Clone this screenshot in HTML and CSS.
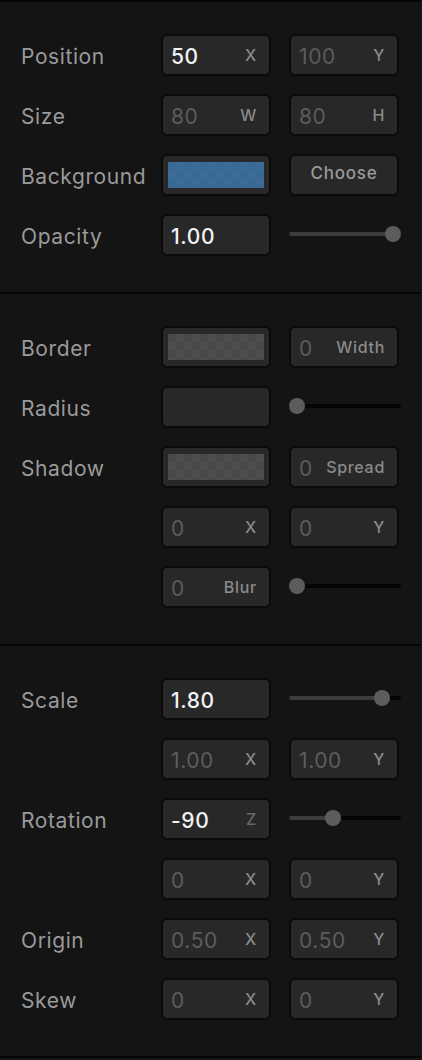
FILE: index.html
```html
<!DOCTYPE html>
<html>
<head>
<meta charset="utf-8">
<link rel="stylesheet" href="styles.css">
</head>
<body>
<div class="panel">
  <section class="section">
    <div class="row">
      <div class="label">Position</div>
      <div class="field"><span class="val on">50</span><span class="suf">X</span></div>
      <div class="field"><span class="val">100</span><span class="suf">Y</span></div>
    </div>
    <div class="row">
      <div class="label">Size</div>
      <div class="field"><span class="val">80</span><span class="suf">W</span></div>
      <div class="field"><span class="val">80</span><span class="suf">H</span></div>
    </div>
    <div class="row">
      <div class="label">Background</div>
      <div class="field swatch-field"><div class="swatch blue"></div></div>
      <div class="field button">Choose</div>
    </div>
    <div class="row">
      <div class="label">Opacity</div>
      <div class="field"><span class="val on">1.00</span></div>
      <div class="slider" style="--p:1"><div class="track"><div class="fill"></div><div class="knob"></div></div></div>
    </div>
  </section>
  <section class="section">
    <div class="row">
      <div class="label">Border</div>
      <div class="field swatch-field"><div class="swatch grey"></div></div>
      <div class="field"><span class="val">0</span><span class="suf">Width</span></div>
    </div>
    <div class="row">
      <div class="label">Radius</div>
      <div class="field"></div>
      <div class="slider" style="--p:0"><div class="track"><div class="fill empty"></div><div class="knob"></div></div></div>
    </div>
    <div class="row">
      <div class="label">Shadow</div>
      <div class="field swatch-field"><div class="swatch grey"></div></div>
      <div class="field"><span class="val">0</span><span class="suf">Spread</span></div>
    </div>
    <div class="row">
      <div class="label"></div>
      <div class="field"><span class="val">0</span><span class="suf">X</span></div>
      <div class="field"><span class="val">0</span><span class="suf">Y</span></div>
    </div>
    <div class="row">
      <div class="label"></div>
      <div class="field"><span class="val">0</span><span class="suf">Blur</span></div>
      <div class="slider" style="--p:0"><div class="track"><div class="fill empty"></div><div class="knob"></div></div></div>
    </div>
  </section>
  <section class="section">
    <div class="row">
      <div class="label">Scale</div>
      <div class="field"><span class="val on">1.80</span></div>
      <div class="slider" style="--p:0.885"><div class="track"><div class="fill"></div><div class="knob"></div></div></div>
    </div>
    <div class="row">
      <div class="label"></div>
      <div class="field"><span class="val">1.00</span><span class="suf">X</span></div>
      <div class="field"><span class="val">1.00</span><span class="suf">Y</span></div>
    </div>
    <div class="row">
      <div class="label">Rotation</div>
      <div class="field"><span class="val on">-90</span><span class="suf dim">Z</span></div>
      <div class="slider" style="--p:0.375"><div class="track"><div class="fill"></div><div class="knob"></div></div></div>
    </div>
    <div class="row">
      <div class="label"></div>
      <div class="field"><span class="val">0</span><span class="suf">X</span></div>
      <div class="field"><span class="val">0</span><span class="suf">Y</span></div>
    </div>
    <div class="row">
      <div class="label">Origin</div>
      <div class="field"><span class="val">0.50</span><span class="suf">X</span></div>
      <div class="field"><span class="val">0.50</span><span class="suf">Y</span></div>
    </div>
    <div class="row">
      <div class="label">Skew</div>
      <div class="field"><span class="val">0</span><span class="suf">X</span></div>
      <div class="field"><span class="val">0</span><span class="suf">Y</span></div>
    </div>
  </section>
  <section class="section tail"></section>
</div>
</body>
</html>
```

FILE: styles.css
```css
html, body {
  margin: 0;
  padding: 0;
  background: #141414;
}
body {
  font-family: Inter, "Open Sans", "Liberation Sans", sans-serif;
  width: 422px;
  height: 1060px;
  overflow: hidden;
}
.panel {
  display: flex;
  flex-direction: column;
  border-right: 1px solid #1b1b1b;
  box-sizing: border-box;
  height: 1060px;
}
.section {
  border-top: 2px solid #050505;
  padding: 32px 0 36px 21px;
  display: flex;
  flex-direction: column;
  gap: 18px;
}
.section.tail {
  padding: 0;
  flex: 1;
  background: #161616;
}
.row {
  display: grid;
  grid-template-columns: 122px 110px 112px;
  column-gap: 18px;
  height: 42px;
  align-items: center;
}
.label {
  color: #9a9a9a;
  font-size: 21px;
  letter-spacing: 0.6px;
  padding-top: 3px;
}
.field {
  box-sizing: border-box;
  height: 42px;
  width: 110px;
  border: 2px solid #0a0a0a;
  border-radius: 6px;
  background: #282828;
  display: flex;
  align-items: center;
  justify-content: space-between;
  padding: 3px 12px 0 8px;
}
.val {
  font-size: 21px;
  color: #5c5c5c;
  font-weight: 400;
  letter-spacing: 0.6px;
}
.val.on {
  color: #f2f2f2;
  font-weight: 500;
}
.suf {
  font-size: 16px;
  font-weight: 500;
  color: #8a8a8a;
  letter-spacing: 0.7px;
  padding-bottom: 3px;
}
.suf.dim {
  color: #676767;
}
.swatch-field {
  padding: 6px 5px;
}
.swatch {
  width: 100%;
  height: 100%;
}
.swatch.blue {
  background-color: #386895;
  background-image: linear-gradient(45deg, rgba(255,255,255,0.02) 25%, transparent 25%, transparent 75%, rgba(255,255,255,0.02) 75%), linear-gradient(45deg, rgba(255,255,255,0.02) 25%, transparent 25%, transparent 75%, rgba(255,255,255,0.02) 75%);
  background-size: 16px 16px;
  background-position: 0 0, 8px 8px;
}
.swatch.grey {
  background-color: #4a4a4a;
  background-image: linear-gradient(45deg, rgba(255,255,255,0.025) 25%, transparent 25%, transparent 75%, rgba(255,255,255,0.025) 75%), linear-gradient(45deg, rgba(255,255,255,0.025) 25%, transparent 25%, transparent 75%, rgba(255,255,255,0.025) 75%);
  background-size: 16px 16px;
  background-position: 0 0, 8px 8px;
}
.button {
  justify-content: center;
  color: #9a9a9a;
  font-size: 17px;
  font-weight: 500;
  padding: 0 0 4px 0;
  letter-spacing: 0.8px;
}
.slider {
  height: 42px;
  width: 112px;
  display: flex;
  align-items: center;
  padding: 0 0 2px 0;
  box-sizing: border-box;
}
.track {
  position: relative;
  width: 112px;
  height: 4px;
  border-radius: 2px;
  background: #050505;
}
.fill {
  height: 100%;
  border-radius: 2px;
  background: #3c3c3c;
  width: calc(8px + var(--p) * (100% - 16px));
}
.fill.empty {
  background: transparent;
}
.knob {
  position: absolute;
  top: 50%;
  left: calc(8px + var(--p) * (100% - 16px));
  width: 16px;
  height: 16px;
  border-radius: 50%;
  background: #5c5c5c;
  transform: translate(-50%, -50%);
}
```
